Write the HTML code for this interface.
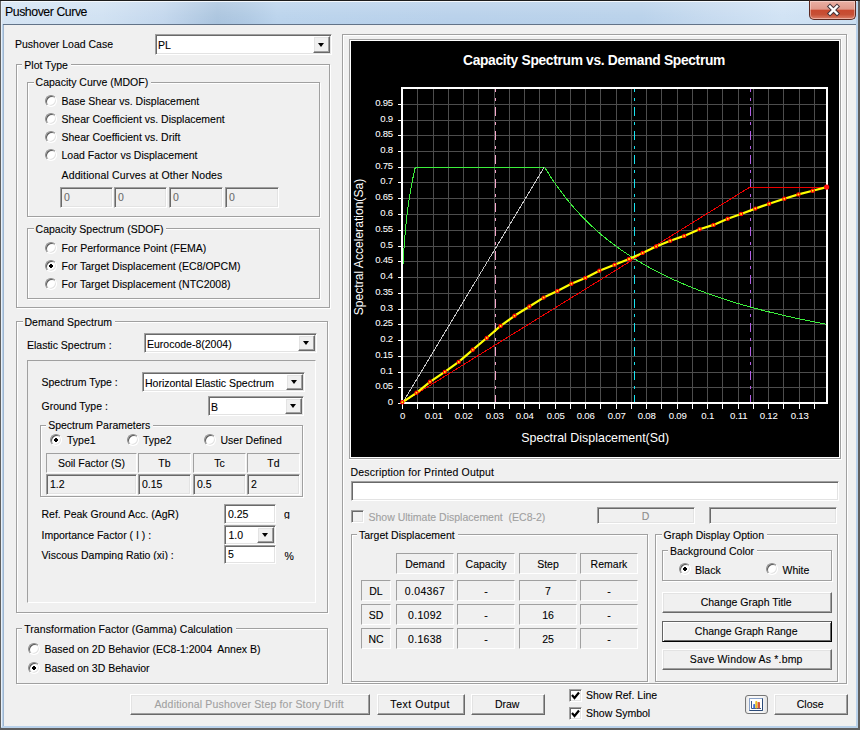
<!DOCTYPE html><html><head><meta charset='utf-8'><style>
*{margin:0;padding:0}
html,body{width:860px;height:730px;overflow:hidden;background:#2b2b2b}
body{position:relative;font-family:'Liberation Sans', sans-serif}
.t{position:absolute;white-space:pre;font-family:'Liberation Sans', sans-serif;-webkit-text-stroke:0.1px currentColor}
.etch{position:absolute;border:1px solid #a0a0a0;box-shadow:inset 1px 1px 0 #fff,1px 1px 0 #fff}
.sunk{position:absolute;border:1px solid;border-color:#a0a0a0 #fff #fff #a0a0a0;box-shadow:inset 1px 1px 0 #696969,inset -1px -1px 0 #e3e3e3}
.rad{position:absolute;width:10px;height:10px;border-radius:50%;background:#fff;border:1px solid;border-color:#8c8c8c #fff #fff #8c8c8c;box-shadow:inset 1px 1px 0 #5a5a5a,inset -1px -1px 0 #e3e3e3}
.btn{position:absolute;background:#f0f0f0;border:1px solid;border-color:#fff #696969 #696969 #fff;box-shadow:inset -1px -1px 0 #a0a0a0,inset 1px 1px 0 #e3e3e3}
.btn.def{border-color:#646464 #000 #000 #646464;box-shadow:inset 1px 1px 0 #fff,inset -1px -1px 0 #696969}
</style></head><body>
<div style="position:absolute;left:0;top:0;width:860px;height:730px;background:#5f5f5f"></div>
<div style="position:absolute;left:0px;top:0px;width:860px;height:1px;background:#1c1c1c"></div>
<div style="position:absolute;left:1px;top:1px;width:857px;height:727px;background:#b9d1ea"></div>
<div style="position:absolute;left:2px;top:1px;width:855px;height:1px;background:#f4f8fc"></div>
<div style="position:absolute;left:2px;top:2px;width:854px;height:22px;background:linear-gradient(90deg,#d5e4f3 0px,#d0e1f2 100px,#c3d7ed 160px,#aac4de 215px,#afc9e3 245px,#bad3ec 275px,#b7d0ea 450px,#b8d1ea 640px,#c6daef 710px,#d0e2f4 780px,#cadef1 854px)"></div>
<div style="position:absolute;left:2px;top:2px;width:854px;height:22px;background:linear-gradient(180deg,rgba(255,255,255,0.18) 0%,rgba(255,255,255,0.05) 60%,rgba(0,0,0,0) 100%)"></div>
<div style="position:absolute;left:1px;top:1px;width:1px;height:726px;background:#e8f0f8"></div>
<div style="position:absolute;left:3px;top:24px;width:853px;height:1px;background:#627388"></div>
<div style="position:absolute;left:3px;top:25px;width:1px;height:701px;background:#9fb6cf"></div>
<div style="position:absolute;left:4px;top:25px;width:852px;height:701px;background:#f0f0f0"></div>
<div class="t" id="t0" style="letter-spacing:-0.441px;left:5px;top:5px;font-size:12.3px;line-height:15px;color:#000;">Pushover Curve</div>
<div style="position:absolute;left:809px;top:0px;width:47px;height:20px;border:1px solid #5a2820;border-top-color:#2a1a18;border-radius:0 0 5px 5px;box-sizing:border-box;background:linear-gradient(180deg,#eab0a4 0%,#e0988a 45%,#c9492f 52%,#c65036 75%,#dc7f69 100%);box-shadow:inset 0 0 0 1px rgba(255,235,230,0.45)"></div>
<svg style="position:absolute;left:822px;top:3px" width="22" height="14" viewBox="0 0 22 14"><path d="M8,3.5 L15,10.5 M15,3.5 L8,10.5" stroke="#43333a" stroke-width="4.4" stroke-linecap="square"/><path d="M8,3.5 L15,10.5 M15,3.5 L8,10.5" stroke="#fff" stroke-width="2.4" stroke-linecap="square"/></svg>
<div class="t" id="t1" style="letter-spacing:-0.004px;left:15px;top:38px;font-size:10.5px;line-height:13px;color:#000;">Pushover Load Case</div>
<div class="sunk" style="left:155px;top:34px;width:175px;height:19px;background:#fff"></div>
<div class="btn" style="left:313px;top:36px;width:15px;height:15px"></div>
<div style="position:absolute;left:318.0px;top:42.5px;width:0;height:0;border-left:3.5px solid transparent;border-right:3.5px solid transparent;border-top:4px solid #000"></div>
<div class="t" id="t2" style="left:158px;top:39px;font-size:10.5px;line-height:13px;color:#000;">PL</div>
<div class="etch" style="left:16px;top:64px;width:312px;height:242px"></div>
<div class="t" id="t3" style="left:22.3px;top:59px;font-size:10.5px;line-height:13px;color:#000;background:#f0f0f0;padding:0 3px 0 2px;">Plot Type</div>
<div class="etch" style="left:27px;top:82px;width:291px;height:133px"></div>
<div class="t" id="t4" style="left:33.6px;top:76px;font-size:10.5px;line-height:13px;color:#000;background:#f0f0f0;padding:0 3px 0 2px;">Capacity Curve (MDOF)</div>
<div class="rad" style="left:45px;top:95px"></div>
<div class="t" id="t5" style="left:61.5px;top:95px;font-size:10.5px;line-height:13px;color:#000;">Base Shear vs. Displacement</div>
<div class="rad" style="left:45px;top:113px"></div>
<div class="t" id="t6" style="left:61.5px;top:113px;font-size:10.5px;line-height:13px;color:#000;">Shear Coefficient vs. Displacement</div>
<div class="rad" style="left:45px;top:131px"></div>
<div class="t" id="t7" style="left:61.5px;top:131px;font-size:10.5px;line-height:13px;color:#000;">Shear Coefficient vs. Drift</div>
<div class="rad" style="left:45px;top:149px"></div>
<div class="t" id="t8" style="left:61.5px;top:149px;font-size:10.5px;line-height:13px;color:#000;">Load Factor vs Displacement</div>
<div class="t" id="t9" style="letter-spacing:0.143px;left:61.5px;top:169px;font-size:10.5px;line-height:13px;color:#000;">Additional Curves at Other Nodes</div>
<div class="sunk" style="left:60px;top:187px;width:51px;height:19px;background:#f0f0f0"></div>
<div class="t" id="t10" style="left:64px;top:191px;font-size:10.5px;line-height:13px;color:#6d6d6d;">0</div>
<div class="sunk" style="left:114px;top:187px;width:51px;height:19px;background:#f0f0f0"></div>
<div class="t" id="t11" style="left:118px;top:191px;font-size:10.5px;line-height:13px;color:#6d6d6d;">0</div>
<div class="sunk" style="left:169px;top:187px;width:52px;height:19px;background:#f0f0f0"></div>
<div class="t" id="t12" style="left:173px;top:191px;font-size:10.5px;line-height:13px;color:#6d6d6d;">0</div>
<div class="sunk" style="left:225px;top:187px;width:52px;height:19px;background:#f0f0f0"></div>
<div class="t" id="t13" style="left:229px;top:191px;font-size:10.5px;line-height:13px;color:#6d6d6d;">0</div>
<div class="etch" style="left:27px;top:228px;width:291px;height:69px"></div>
<div class="t" id="t14" style="left:33.6px;top:223px;font-size:10.5px;line-height:13px;color:#000;background:#f0f0f0;padding:0 3px 0 2px;">Capacity Spectrum (SDOF)</div>
<div class="rad" style="left:45px;top:242px"></div>
<div class="t" id="t15" style="left:61.5px;top:242px;font-size:10.5px;line-height:13px;color:#000;">For Performance Point (FEMA)</div>
<div class="rad" style="left:45px;top:260px"></div>
<svg style="position:absolute;left:49px;top:264px" width="4" height="4"><path d="M1,0H3V1H4V3H3V4H1V3H0V1H1Z" fill="#000"/></svg>
<div class="t" id="t16" style="left:61.5px;top:260px;font-size:10.5px;line-height:13px;color:#000;">For Target Displacement (EC8/OPCM)</div>
<div class="rad" style="left:45px;top:278px"></div>
<div class="t" id="t17" style="left:61.5px;top:278px;font-size:10.5px;line-height:13px;color:#000;">For Target Displacement (NTC2008)</div>
<div class="etch" style="left:16px;top:321px;width:310px;height:290px"></div>
<div class="t" id="t18" style="left:22.5px;top:316px;font-size:10.5px;line-height:13px;color:#000;background:#f0f0f0;padding:0 3px 0 2px;">Demand Spectrum</div>
<div class="t" id="t19" style="left:27px;top:339px;font-size:10.5px;line-height:13px;color:#000;">Elastic Spectrum :</div>
<div class="sunk" style="left:144px;top:333px;width:171px;height:18px;background:#fff"></div>
<div class="btn" style="left:298px;top:335px;width:15px;height:14px"></div>
<div style="position:absolute;left:303.0px;top:341.0px;width:0;height:0;border-left:3.5px solid transparent;border-right:3.5px solid transparent;border-top:4px solid #000"></div>
<div class="t" id="t20" style="left:147px;top:338px;font-size:10.5px;line-height:13px;color:#000;">Eurocode-8(2004)</div>
<div style="position:absolute;left:27px;top:360px;width:287px;height:241px;border:1px solid;border-color:#a0a0a0 #fff #fff #a0a0a0;background:transparent"></div>
<div class="t" id="t21" style="left:41.5px;top:375.5px;font-size:10.5px;line-height:13px;color:#000;">Spectrum Type :</div>
<div class="sunk" style="left:142px;top:372px;width:161px;height:18px;background:#fff"></div>
<div class="btn" style="left:286px;top:374px;width:15px;height:14px"></div>
<div style="position:absolute;left:291.0px;top:380.0px;width:0;height:0;border-left:3.5px solid transparent;border-right:3.5px solid transparent;border-top:4px solid #000"></div>
<div class="t" id="t22" style="left:145px;top:376.5px;font-size:10.5px;line-height:13px;color:#000;">Horizontal Elastic Spectrum</div>
<div class="t" id="t23" style="left:41.5px;top:399.5px;font-size:10.5px;line-height:13px;color:#000;">Ground Type :</div>
<div class="sunk" style="left:208px;top:396px;width:94px;height:18px;background:#fff"></div>
<div class="btn" style="left:285px;top:398px;width:15px;height:14px"></div>
<div style="position:absolute;left:290.0px;top:404.0px;width:0;height:0;border-left:3.5px solid transparent;border-right:3.5px solid transparent;border-top:4px solid #000"></div>
<div class="t" id="t24" style="left:211px;top:401px;font-size:10.5px;line-height:13px;color:#000;">B</div>
<div class="etch" style="left:40px;top:425px;width:261px;height:70px"></div>
<div class="t" id="t25" style="left:46.2px;top:419px;font-size:10.5px;line-height:13px;color:#000;background:#f0f0f0;padding:0 3px 0 2px;">Spectrum Parameters</div>
<div class="rad" style="left:50px;top:434px"></div>
<svg style="position:absolute;left:54px;top:438px" width="4" height="4"><path d="M1,0H3V1H4V3H3V4H1V3H0V1H1Z" fill="#000"/></svg>
<div class="t" id="t26" style="left:67px;top:434px;font-size:10.5px;line-height:13px;color:#000;">Type1</div>
<div class="rad" style="left:127px;top:434px"></div>
<div class="t" id="t27" style="left:143px;top:434px;font-size:10.5px;line-height:13px;color:#000;">Type2</div>
<div class="rad" style="left:204px;top:434px"></div>
<div class="t" id="t28" style="left:220.5px;top:434px;font-size:10.5px;line-height:13px;color:#000;">User Defined</div>
<div style="position:absolute;left:46px;top:453px;width:89px;height:18px;border:1px solid;border-color:#a0a0a0 #fff #fff #a0a0a0;background:transparent"></div>
<div class="t" id="t29" style="left:91.5px;top:457px;font-size:10.5px;line-height:13px;color:#000;transform:translateX(-50%);">Soil Factor (S)</div>
<div class="sunk" style="left:46px;top:474px;width:89px;height:19px;background:#f0f0f0"></div>
<div class="t" id="t30" style="left:50px;top:478px;font-size:10.5px;line-height:13px;color:#000;">1.2</div>
<div style="position:absolute;left:138px;top:453px;width:51px;height:18px;border:1px solid;border-color:#a0a0a0 #fff #fff #a0a0a0;background:transparent"></div>
<div class="t" id="t31" style="left:164.5px;top:457px;font-size:10.5px;line-height:13px;color:#000;transform:translateX(-50%);">Tb</div>
<div class="sunk" style="left:138px;top:474px;width:51px;height:19px;background:#f0f0f0"></div>
<div class="t" id="t32" style="left:142px;top:478px;font-size:10.5px;line-height:13px;color:#000;">0.15</div>
<div style="position:absolute;left:193px;top:453px;width:51px;height:18px;border:1px solid;border-color:#a0a0a0 #fff #fff #a0a0a0;background:transparent"></div>
<div class="t" id="t33" style="left:219.5px;top:457px;font-size:10.5px;line-height:13px;color:#000;transform:translateX(-50%);">Tc</div>
<div class="sunk" style="left:193px;top:474px;width:51px;height:19px;background:#f0f0f0"></div>
<div class="t" id="t34" style="left:197px;top:478px;font-size:10.5px;line-height:13px;color:#000;">0.5</div>
<div style="position:absolute;left:247px;top:453px;width:51px;height:18px;border:1px solid;border-color:#a0a0a0 #fff #fff #a0a0a0;background:transparent"></div>
<div class="t" id="t35" style="left:273.5px;top:457px;font-size:10.5px;line-height:13px;color:#000;transform:translateX(-50%);">Td</div>
<div class="sunk" style="left:247px;top:474px;width:51px;height:19px;background:#f0f0f0"></div>
<div class="t" id="t36" style="left:251px;top:478px;font-size:10.5px;line-height:13px;color:#000;">2</div>
<div class="t" id="t37" style="left:41.5px;top:508px;font-size:10.5px;line-height:13px;color:#000;">Ref. Peak Ground Acc. (AgR)</div>
<div class="sunk" style="left:224px;top:504px;width:50px;height:18px;background:#fff"></div>
<div class="t" id="t38" style="left:228px;top:508px;font-size:10.5px;line-height:13px;color:#000;">0.25</div>
<div style="position:absolute;left:284px;top:508px;width:10px;height:11px;overflow:hidden">
<div class="t" id="t39" style="left:0px;top:0px;font-size:10.5px;line-height:13px;color:#000;">g</div>
</div>
<div class="t" id="t40" style="left:41.5px;top:529px;font-size:10.5px;line-height:13px;color:#000;">Importance Factor ( I ) :</div>
<div class="sunk" style="left:224px;top:525px;width:50px;height:18px;background:#fff"></div>
<div class="btn" style="left:257px;top:527px;width:15px;height:14px"></div>
<div style="position:absolute;left:262.0px;top:533.0px;width:0;height:0;border-left:3.5px solid transparent;border-right:3.5px solid transparent;border-top:4px solid #000"></div>
<div class="t" id="t41" style="left:228.5px;top:529px;font-size:10.5px;line-height:13px;color:#000;">1.0</div>
<div style="position:absolute;left:41px;top:549px;width:170px;height:11px;overflow:hidden">
<div class="t" id="t42" style="left:0.5px;top:0px;font-size:10.5px;line-height:13px;color:#000;">Viscous Damping Ratio (xi) :</div>
</div>
<div class="sunk" style="left:224px;top:545px;width:50px;height:17px;background:#fff"></div>
<div class="t" id="t43" style="left:228px;top:548px;font-size:10.5px;line-height:13px;color:#000;">5</div>
<div class="t" id="t44" style="left:284.5px;top:550px;font-size:10.5px;line-height:13px;color:#000;">%</div>
<div class="etch" style="left:16px;top:628px;width:310px;height:54px"></div>
<div class="t" id="t45" style="letter-spacing:0.083px;left:22.2px;top:622.5px;font-size:10.5px;line-height:13px;color:#000;background:#f0f0f0;padding:0 3px 0 2px;">Transformation Factor (Gamma) Calculation</div>
<div class="rad" style="left:28px;top:643px"></div>
<div class="t" id="t46" style="left:44.5px;top:643px;font-size:10.5px;line-height:13px;color:#000;">Based on 2D Behavior (EC8-1:2004&nbsp; Annex B)</div>
<div class="rad" style="left:28px;top:662px"></div>
<svg style="position:absolute;left:32px;top:666px" width="4" height="4"><path d="M1,0H3V1H4V3H3V4H1V3H0V1H1Z" fill="#000"/></svg>
<div class="t" id="t47" style="left:44.5px;top:662px;font-size:10.5px;line-height:13px;color:#000;">Based on 3D Behavior</div>
<div class="etch" style="left:342px;top:34px;width:503px;height:648px"></div>
<div style="position:absolute;left:349px;top:39px;width:492px;height:420px;border-top:1px solid #a0a0a0;border-left:1px solid #a0a0a0;box-sizing:border-box"></div>
<div style="position:absolute;left:350px;top:40px;width:490px;height:418px;border-top:1px solid #fff;border-left:1px solid #fff;box-sizing:border-box"></div>
<div style="position:absolute;left:351px;top:41px;width:488px;height:416px;background:#000"></div>
<div style="position:absolute;left:839px;top:40px;width:1px;height:418px;background:#fff"></div>
<div style="position:absolute;left:350px;top:457px;width:490px;height:1px;background:#fff"></div>
<div style="position:absolute;left:840px;top:39px;width:1px;height:420px;background:#a0a0a0"></div>
<div style="position:absolute;left:349px;top:458px;width:492px;height:1px;background:#a0a0a0"></div>
<div style="position:absolute;left:841px;top:39px;width:1px;height:421px;background:#fff"></div>
<div style="position:absolute;left:349px;top:459px;width:493px;height:1px;background:#fff"></div>
<div class="t" id="t48" style="letter-spacing:0.176px;left:350.6px;top:466px;font-size:10.5px;line-height:13px;color:#000;">Description for Printed Output</div>
<div class="sunk" style="left:351px;top:481px;width:486px;height:18px;background:#fff"></div>
<div class="sunk" style="left:351px;top:510px;width:11px;height:11px;background:#f0f0f0"></div>
<div class="t" id="t49" style="left:368.5px;top:510.5px;font-size:10.5px;line-height:13px;color:#a0a0a0;">Show Ultimate Displacement&nbsp; (EC8-2)</div>
<div class="sunk" style="left:597px;top:507px;width:96px;height:15px;background:#f0f0f0"></div>
<div class="t" id="t50" style="left:645.5px;top:510px;font-size:10.5px;line-height:13px;color:#8d8d8d;transform:translateX(-50%);">D</div>
<div class="sunk" style="left:709px;top:507px;width:126px;height:15px;background:#f0f0f0"></div>
<div class="etch" style="left:351px;top:534px;width:295px;height:146px"></div>
<div class="t" id="t51" style="left:357px;top:529px;font-size:10.5px;line-height:13px;color:#000;background:#f0f0f0;padding:0 3px 0 2px;">Target Displacement</div>
<div style="position:absolute;left:396px;top:553px;width:56px;height:19px;border:1px solid;border-color:#a0a0a0 #fff #fff #a0a0a0;background:transparent"></div>
<div class="t" id="t52" style="left:425.0px;top:557.5px;font-size:10.5px;line-height:13px;color:#000;transform:translateX(-50%);">Demand</div>
<div style="position:absolute;left:457px;top:553px;width:56px;height:19px;border:1px solid;border-color:#a0a0a0 #fff #fff #a0a0a0;background:transparent"></div>
<div class="t" id="t53" style="left:486.0px;top:557.5px;font-size:10.5px;line-height:13px;color:#000;transform:translateX(-50%);">Capacity</div>
<div style="position:absolute;left:519px;top:553px;width:56px;height:19px;border:1px solid;border-color:#a0a0a0 #fff #fff #a0a0a0;background:transparent"></div>
<div class="t" id="t54" style="left:548.0px;top:557.5px;font-size:10.5px;line-height:13px;color:#000;transform:translateX(-50%);">Step</div>
<div style="position:absolute;left:580px;top:553px;width:56px;height:19px;border:1px solid;border-color:#a0a0a0 #fff #fff #a0a0a0;background:transparent"></div>
<div class="t" id="t55" style="left:609.0px;top:557.5px;font-size:10.5px;line-height:13px;color:#000;transform:translateX(-50%);">Remark</div>
<div style="position:absolute;left:361px;top:580px;width:28px;height:19px;border:1px solid;border-color:#a0a0a0 #fff #fff #a0a0a0;background:transparent"></div>
<div class="t" id="t56" style="left:376px;top:584.5px;font-size:10.5px;line-height:13px;color:#000;transform:translateX(-50%);">DL</div>
<div style="position:absolute;left:396px;top:580px;width:56px;height:19px;border:1px solid;border-color:#a0a0a0 #fff #fff #a0a0a0;background:transparent"></div>
<div class="t" id="t57" style="letter-spacing:0.333px;left:425.0px;top:584.5px;font-size:10.5px;line-height:13px;color:#000;transform:translateX(-50%);">0.04367</div>
<div style="position:absolute;left:457px;top:580px;width:56px;height:19px;border:1px solid;border-color:#a0a0a0 #fff #fff #a0a0a0;background:transparent"></div>
<div class="t" id="t58" style="left:486.0px;top:584.5px;font-size:10.5px;line-height:13px;color:#000;transform:translateX(-50%);">-</div>
<div style="position:absolute;left:519px;top:580px;width:56px;height:19px;border:1px solid;border-color:#a0a0a0 #fff #fff #a0a0a0;background:transparent"></div>
<div class="t" id="t59" style="left:548.0px;top:584.5px;font-size:10.5px;line-height:13px;color:#000;transform:translateX(-50%);">7</div>
<div style="position:absolute;left:580px;top:580px;width:56px;height:19px;border:1px solid;border-color:#a0a0a0 #fff #fff #a0a0a0;background:transparent"></div>
<div class="t" id="t60" style="left:609.0px;top:584.5px;font-size:10.5px;line-height:13px;color:#000;transform:translateX(-50%);">-</div>
<div style="position:absolute;left:361px;top:604px;width:28px;height:19px;border:1px solid;border-color:#a0a0a0 #fff #fff #a0a0a0;background:transparent"></div>
<div class="t" id="t61" style="left:376px;top:608.5px;font-size:10.5px;line-height:13px;color:#000;transform:translateX(-50%);">SD</div>
<div style="position:absolute;left:396px;top:604px;width:56px;height:19px;border:1px solid;border-color:#a0a0a0 #fff #fff #a0a0a0;background:transparent"></div>
<div class="t" id="t62" style="letter-spacing:0.312px;left:425.0px;top:608.5px;font-size:10.5px;line-height:13px;color:#000;transform:translateX(-50%);">0.1092</div>
<div style="position:absolute;left:457px;top:604px;width:56px;height:19px;border:1px solid;border-color:#a0a0a0 #fff #fff #a0a0a0;background:transparent"></div>
<div class="t" id="t63" style="left:486.0px;top:608.5px;font-size:10.5px;line-height:13px;color:#000;transform:translateX(-50%);">-</div>
<div style="position:absolute;left:519px;top:604px;width:56px;height:19px;border:1px solid;border-color:#a0a0a0 #fff #fff #a0a0a0;background:transparent"></div>
<div class="t" id="t64" style="left:548.0px;top:608.5px;font-size:10.5px;line-height:13px;color:#000;transform:translateX(-50%);">16</div>
<div style="position:absolute;left:580px;top:604px;width:56px;height:19px;border:1px solid;border-color:#a0a0a0 #fff #fff #a0a0a0;background:transparent"></div>
<div class="t" id="t65" style="left:609.0px;top:608.5px;font-size:10.5px;line-height:13px;color:#000;transform:translateX(-50%);">-</div>
<div style="position:absolute;left:361px;top:628px;width:28px;height:19px;border:1px solid;border-color:#a0a0a0 #fff #fff #a0a0a0;background:transparent"></div>
<div class="t" id="t66" style="left:376px;top:632.5px;font-size:10.5px;line-height:13px;color:#000;transform:translateX(-50%);">NC</div>
<div style="position:absolute;left:396px;top:628px;width:56px;height:19px;border:1px solid;border-color:#a0a0a0 #fff #fff #a0a0a0;background:transparent"></div>
<div class="t" id="t67" style="letter-spacing:0.312px;left:425.0px;top:632.5px;font-size:10.5px;line-height:13px;color:#000;transform:translateX(-50%);">0.1638</div>
<div style="position:absolute;left:457px;top:628px;width:56px;height:19px;border:1px solid;border-color:#a0a0a0 #fff #fff #a0a0a0;background:transparent"></div>
<div class="t" id="t68" style="left:486.0px;top:632.5px;font-size:10.5px;line-height:13px;color:#000;transform:translateX(-50%);">-</div>
<div style="position:absolute;left:519px;top:628px;width:56px;height:19px;border:1px solid;border-color:#a0a0a0 #fff #fff #a0a0a0;background:transparent"></div>
<div class="t" id="t69" style="left:548.0px;top:632.5px;font-size:10.5px;line-height:13px;color:#000;transform:translateX(-50%);">25</div>
<div style="position:absolute;left:580px;top:628px;width:56px;height:19px;border:1px solid;border-color:#a0a0a0 #fff #fff #a0a0a0;background:transparent"></div>
<div class="t" id="t70" style="left:609.0px;top:632.5px;font-size:10.5px;line-height:13px;color:#000;transform:translateX(-50%);">-</div>
<div class="etch" style="left:655px;top:534px;width:181px;height:146px"></div>
<div class="t" id="t71" style="left:661.6px;top:529px;font-size:10.5px;line-height:13px;color:#000;background:#f0f0f0;padding:0 3px 0 2px;">Graph Display Option</div>
<div class="etch" style="left:662px;top:550px;width:168px;height:29px"></div>
<div class="t" id="t72" style="left:668px;top:545px;font-size:10.5px;line-height:13px;color:#000;background:#f0f0f0;padding:0 3px 0 2px;">Background Color</div>
<div class="rad" style="left:679px;top:563px"></div>
<svg style="position:absolute;left:683px;top:567px" width="4" height="4"><path d="M1,0H3V1H4V3H3V4H1V3H0V1H1Z" fill="#000"/></svg>
<div class="t" id="t73" style="left:695px;top:564px;font-size:10.5px;line-height:13px;color:#000;">Black</div>
<div class="rad" style="left:766px;top:563px"></div>
<div class="t" id="t74" style="left:782.5px;top:564px;font-size:10.5px;line-height:13px;color:#000;">White</div>
<div class="btn" style="left:662px;top:592px;width:168px;height:19px"></div>
<div class="t" id="t75" style="left:746.2px;top:596px;font-size:10.5px;line-height:13px;color:#000;transform:translateX(-50%);">Change Graph Title</div>
<div class="btn def" style="left:662px;top:621px;width:168px;height:19px"></div>
<div class="t" id="t76" style="left:746.2px;top:625px;font-size:10.5px;line-height:13px;color:#000;transform:translateX(-50%);">Change Graph Range</div>
<div class="btn" style="left:662px;top:649px;width:168px;height:19px"></div>
<div class="t" id="t77" style="letter-spacing:0.188px;left:746.2px;top:653px;font-size:10.5px;line-height:13px;color:#000;transform:translateX(-50%);">Save Window As *.bmp</div>
<div class="btn" style="left:130px;top:694px;width:238px;height:19px"></div>
<div class="t" id="t78" style="letter-spacing:0.171px;left:249.2px;top:698px;font-size:10.5px;line-height:13px;color:#a0a0a0;transform:translateX(-50%);">Additional Pushover Step for Story Drift</div>
<div class="btn" style="left:377px;top:694px;width:86px;height:19px"></div>
<div class="t" id="t79" style="letter-spacing:0.545px;left:420.2px;top:698px;font-size:10.5px;line-height:13px;color:#000;transform:translateX(-50%);">Text Output</div>
<div class="btn" style="left:471px;top:694px;width:72px;height:19px"></div>
<div class="t" id="t80" style="left:507.2px;top:698px;font-size:10.5px;line-height:13px;color:#000;transform:translateX(-50%);">Draw</div>
<div class="sunk" style="left:569px;top:689px;width:11px;height:11px;background:#fff"></div>
<svg style="position:absolute;left:569px;top:689px" width="13" height="13"><path d="M3,6 L5.5,9 L10,3.5" stroke="#000" stroke-width="2.2" fill="none"/></svg>
<div class="t" id="t81" style="left:586px;top:689px;font-size:10.5px;line-height:13px;color:#000;">Show Ref. Line</div>
<div class="sunk" style="left:569px;top:707px;width:11px;height:11px;background:#fff"></div>
<svg style="position:absolute;left:569px;top:707px" width="13" height="13"><path d="M3,6 L5.5,9 L10,3.5" stroke="#000" stroke-width="2.2" fill="none"/></svg>
<div class="t" id="t82" style="left:586px;top:707px;font-size:10.5px;line-height:13px;color:#000;">Show Symbol</div>
<div style="position:absolute;left:745px;top:695px;width:21px;height:17px;border:1px solid #767676;border-radius:3px;background:linear-gradient(90deg,#e6e6e6,#fafafa 20%,#f4f4f4 80%,#e0e0e0)"></div>
<svg style="position:absolute;left:745px;top:695px" width="23" height="19" viewBox="0 0 23 19"><rect x="4.5" y="3.5" width="13" height="12" fill="#fff" stroke="#8aa2c8" stroke-width="1"/><path d="M17.5,3.5V15.5H4.5" stroke="#2b4a78" stroke-width="1" fill="none"/><path d="M6.5,6V13.5H16" stroke="#3a5a8a" stroke-width="1" fill="none"/><rect x="8.2" y="9" width="2" height="4.5" rx="0.8" fill="#3f6fd8"/><rect x="10.3" y="6" width="2" height="7.5" rx="0.8" fill="#e8c020"/><rect x="12.5" y="6.9" width="2.5" height="6.6" rx="0.8" fill="#d85a3a"/></svg>
<div class="btn" style="left:774px;top:694px;width:72px;height:19px"></div>
<div class="t" id="t83" style="left:810.2px;top:698px;font-size:10.5px;line-height:13px;color:#000;transform:translateX(-50%);">Close</div>
<svg style="position:absolute;left:0;top:0" width="860" height="730" viewBox="0 0 860 730">
<path d="M417.5,89V402 M433.5,89V402 M448.5,89V402 M463.5,89V402 M478.5,89V402 M494.5,89V402 M509.5,89V402 M524.5,89V402 M539.5,89V402 M555.5,89V402 M570.5,89V402 M585.5,89V402 M600.5,89V402 M616.5,89V402 M631.5,89V402 M646.5,89V402 M661.5,89V402 M677.5,89V402 M692.5,89V402 M707.5,89V402 M722.5,89V402 M738.5,89V402 M753.5,89V402 M768.5,89V402 M783.5,89V402 M799.5,89V402 M814.5,89V402 M403,387.5H826 M403,372.5H826 M403,356.5H826 M403,340.5H826 M403,324.5H826 M403,309.5H826 M403,293.5H826 M403,277.5H826 M403,261.5H826 M403,246.5H826 M403,230.5H826 M403,214.5H826 M403,198.5H826 M403,182.5H826 M403,167.5H826 M403,151.5H826 M403,135.5H826 M403,120.5H826 M403,104.5H826" stroke="#4d4d4d" stroke-width="1" shape-rendering="crispEdges" fill="none"/>
<path d="M398,403.5H401 M398,387.5H401 M398,372.5H401 M398,356.5H401 M398,340.5H401 M398,324.5H401 M398,309.5H401 M398,293.5H401 M398,277.5H401 M398,261.5H401 M398,246.5H401 M398,230.5H401 M398,214.5H401 M398,198.5H401 M398,182.5H401 M398,167.5H401 M398,151.5H401 M398,135.5H401 M398,120.5H401 M398,104.5H401 M402.5,404V409 M417.5,404V409 M433.5,404V409 M448.5,404V409 M463.5,404V409 M478.5,404V409 M494.5,404V409 M509.5,404V409 M524.5,404V409 M539.5,404V409 M555.5,404V409 M570.5,404V409 M585.5,404V409 M600.5,404V409 M616.5,404V409 M631.5,404V409 M646.5,404V409 M661.5,404V409 M677.5,404V409 M692.5,404V409 M707.5,404V409 M722.5,404V409 M738.5,404V409 M753.5,404V409 M768.5,404V409 M783.5,404V409 M799.5,404V409 M814.5,404V409" stroke="#fff" stroke-width="1" shape-rendering="crispEdges" fill="none"/>
<rect x="402" y="88" width="425" height="315" fill="none" stroke="#fff" stroke-width="2" shape-rendering="crispEdges"/>
<path d="M495.5,89V402" stroke="#f7a8cc" stroke-width="1" stroke-dasharray="9 6 3 6" stroke-dashoffset="6" shape-rendering="crispEdges"/>
<path d="M634.5,89V402" stroke="#19e3f0" stroke-width="1" stroke-dasharray="9 6 3 6" stroke-dashoffset="6" shape-rendering="crispEdges"/>
<path d="M750.5,89V402" stroke="#b35ee6" stroke-width="1" stroke-dasharray="9 6 3 6" stroke-dashoffset="6" shape-rendering="crispEdges"/>
<polyline points="403.3,263.6 403.5,258.0 403.8,252.3 404.1,246.6 404.5,241.0 405.0,235.3 405.5,229.6 406.0,224.0 406.6,218.3 407.3,212.6 408.0,206.9 408.8,201.3 409.7,195.6 410.7,189.9 411.7,184.3 412.8,178.6 414.0,172.9 415.3,167.2 544.6,167.2 551.7,178.5 558.8,188.7 565.9,198.1 573.0,206.6 580.1,214.5 587.2,221.8 594.3,228.5 601.4,234.8 608.6,240.6 615.7,246.0 622.8,251.1 629.9,255.8 637.0,260.3 644.1,264.5 651.2,268.5 658.3,272.2 665.4,275.8 672.5,279.2 679.6,282.3 686.7,285.4 693.8,288.3 700.9,291.0 708.0,293.6 715.1,296.1 722.2,298.5 729.3,300.8 736.4,303.0 743.6,305.1 750.7,307.1 757.8,309.0 764.9,310.9 772.0,312.6 779.1,314.3 786.2,316.0 793.3,317.6 800.4,319.1 807.5,320.6 814.6,322.0 821.7,323.4 826.5,324.3" fill="none" stroke="#3cf03c" stroke-width="1" shape-rendering="crispEdges"/>
<path d="M402.5,403 L544,167.5" stroke="#c4c4c4" stroke-width="1" fill="none" shape-rendering="crispEdges"/>
<path d="M402.5,402.5 L749.2,187.5 L826.6,187.5" stroke="#f00000" stroke-width="1" fill="none" shape-rendering="crispEdges"/>
<polyline points="402.3,402.3 416.5,392.8 430.0,381.8 444.8,371.9 458.7,361.9 472.7,349.8 486.7,338.0 500.6,325.9 514.5,315.8 529.4,306.5 543.6,297.6 557.4,291.0 571.4,283.7 585.3,278.0 599.4,270.7 614.6,264.7 629.0,259.0 642.6,252.9 656.1,246.4 670.3,240.8 684.2,235.9 699.6,229.3 713.5,224.9 727.7,218.8 741.1,214.0 755.3,208.6 769.2,203.7 784.3,198.8 798.5,194.4 812.7,190.8 826.6,187.1" fill="none" stroke="#ffff00" stroke-width="2.2" stroke-linejoin="round"/>
<circle cx="402.3" cy="402.3" r="1.6" fill="#ffff00" stroke="#ff0000" stroke-width="1.2"/>
<circle cx="416.5" cy="392.8" r="1.6" fill="#ffff00" stroke="#ff0000" stroke-width="1.2"/>
<circle cx="430" cy="381.8" r="1.6" fill="#ffff00" stroke="#ff0000" stroke-width="1.2"/>
<circle cx="444.8" cy="371.9" r="1.6" fill="#ffff00" stroke="#ff0000" stroke-width="1.2"/>
<circle cx="458.7" cy="361.9" r="1.6" fill="#ffff00" stroke="#ff0000" stroke-width="1.2"/>
<circle cx="472.7" cy="349.8" r="1.6" fill="#ffff00" stroke="#ff0000" stroke-width="1.2"/>
<circle cx="486.7" cy="338" r="1.6" fill="#ffff00" stroke="#ff0000" stroke-width="1.2"/>
<circle cx="500.6" cy="325.9" r="1.6" fill="#ffff00" stroke="#ff0000" stroke-width="1.2"/>
<circle cx="514.5" cy="315.8" r="1.6" fill="#ffff00" stroke="#ff0000" stroke-width="1.2"/>
<circle cx="529.4" cy="306.5" r="1.6" fill="#ffff00" stroke="#ff0000" stroke-width="1.2"/>
<circle cx="543.6" cy="297.6" r="1.6" fill="#ffff00" stroke="#ff0000" stroke-width="1.2"/>
<circle cx="557.4" cy="291" r="1.6" fill="#ffff00" stroke="#ff0000" stroke-width="1.2"/>
<circle cx="571.4" cy="283.7" r="1.6" fill="#ffff00" stroke="#ff0000" stroke-width="1.2"/>
<circle cx="585.3" cy="278" r="1.6" fill="#ffff00" stroke="#ff0000" stroke-width="1.2"/>
<circle cx="599.4" cy="270.7" r="1.6" fill="#ffff00" stroke="#ff0000" stroke-width="1.2"/>
<circle cx="614.6" cy="264.7" r="1.6" fill="#ffff00" stroke="#ff0000" stroke-width="1.2"/>
<circle cx="629" cy="259" r="1.6" fill="#ffff00" stroke="#ff0000" stroke-width="1.2"/>
<circle cx="642.6" cy="252.9" r="1.6" fill="#ffff00" stroke="#ff0000" stroke-width="1.2"/>
<circle cx="656.1" cy="246.4" r="1.6" fill="#ffff00" stroke="#ff0000" stroke-width="1.2"/>
<circle cx="670.3" cy="240.8" r="1.6" fill="#ffff00" stroke="#ff0000" stroke-width="1.2"/>
<circle cx="684.2" cy="235.9" r="1.6" fill="#ffff00" stroke="#ff0000" stroke-width="1.2"/>
<circle cx="699.6" cy="229.3" r="1.6" fill="#ffff00" stroke="#ff0000" stroke-width="1.2"/>
<circle cx="713.5" cy="224.9" r="1.6" fill="#ffff00" stroke="#ff0000" stroke-width="1.2"/>
<circle cx="727.7" cy="218.8" r="1.6" fill="#ffff00" stroke="#ff0000" stroke-width="1.2"/>
<circle cx="741.1" cy="214" r="1.6" fill="#ffff00" stroke="#ff0000" stroke-width="1.2"/>
<circle cx="755.3" cy="208.6" r="1.6" fill="#ffff00" stroke="#ff0000" stroke-width="1.2"/>
<circle cx="769.2" cy="203.7" r="1.6" fill="#ffff00" stroke="#ff0000" stroke-width="1.2"/>
<circle cx="784.3" cy="198.8" r="1.6" fill="#ffff00" stroke="#ff0000" stroke-width="1.2"/>
<circle cx="798.5" cy="194.4" r="1.6" fill="#ffff00" stroke="#ff0000" stroke-width="1.2"/>
<circle cx="812.7" cy="190.8" r="1.6" fill="#ffff00" stroke="#ff0000" stroke-width="1.2"/>
<circle cx="826.6" cy="187.1" r="2.6" fill="#ff1010"/>
</svg>
<div class="t" id="t84" style="letter-spacing:-0.317px;left:463px;top:52px;font-size:13.8px;line-height:17px;color:#fff;font-weight:bold;-webkit-text-stroke:0;">Capacity Spectrum vs. Demand Spectrum</div>
<div class="t" id="t85" style="letter-spacing:0.017px;left:521.3px;top:431px;font-size:12.4px;line-height:15px;color:#fff;-webkit-text-stroke:0;">Spectral Displacement(Sd)</div>
<div class="t" id="t86" style="left:393px;top:396.0px;font-size:9.6px;line-height:12px;color:#fff;transform:translateX(-100%);-webkit-text-stroke:0.05px #fff;letter-spacing:-0.2px;">0</div>
<div class="t" id="t87" style="left:393px;top:380.0px;font-size:9.6px;line-height:12px;color:#fff;transform:translateX(-100%);-webkit-text-stroke:0.05px #fff;letter-spacing:-0.2px;">0.05</div>
<div class="t" id="t88" style="left:393px;top:365.0px;font-size:9.6px;line-height:12px;color:#fff;transform:translateX(-100%);-webkit-text-stroke:0.05px #fff;letter-spacing:-0.2px;">0.1</div>
<div class="t" id="t89" style="left:393px;top:349.0px;font-size:9.6px;line-height:12px;color:#fff;transform:translateX(-100%);-webkit-text-stroke:0.05px #fff;letter-spacing:-0.2px;">0.15</div>
<div class="t" id="t90" style="left:393px;top:333.0px;font-size:9.6px;line-height:12px;color:#fff;transform:translateX(-100%);-webkit-text-stroke:0.05px #fff;letter-spacing:-0.2px;">0.2</div>
<div class="t" id="t91" style="left:393px;top:317.0px;font-size:9.6px;line-height:12px;color:#fff;transform:translateX(-100%);-webkit-text-stroke:0.05px #fff;letter-spacing:-0.2px;">0.25</div>
<div class="t" id="t92" style="left:393px;top:302.0px;font-size:9.6px;line-height:12px;color:#fff;transform:translateX(-100%);-webkit-text-stroke:0.05px #fff;letter-spacing:-0.2px;">0.3</div>
<div class="t" id="t93" style="left:393px;top:286.0px;font-size:9.6px;line-height:12px;color:#fff;transform:translateX(-100%);-webkit-text-stroke:0.05px #fff;letter-spacing:-0.2px;">0.35</div>
<div class="t" id="t94" style="left:393px;top:270.0px;font-size:9.6px;line-height:12px;color:#fff;transform:translateX(-100%);-webkit-text-stroke:0.05px #fff;letter-spacing:-0.2px;">0.4</div>
<div class="t" id="t95" style="left:393px;top:254.0px;font-size:9.6px;line-height:12px;color:#fff;transform:translateX(-100%);-webkit-text-stroke:0.05px #fff;letter-spacing:-0.2px;">0.45</div>
<div class="t" id="t96" style="left:393px;top:239.0px;font-size:9.6px;line-height:12px;color:#fff;transform:translateX(-100%);-webkit-text-stroke:0.05px #fff;letter-spacing:-0.2px;">0.5</div>
<div class="t" id="t97" style="left:393px;top:223.0px;font-size:9.6px;line-height:12px;color:#fff;transform:translateX(-100%);-webkit-text-stroke:0.05px #fff;letter-spacing:-0.2px;">0.55</div>
<div class="t" id="t98" style="left:393px;top:207.0px;font-size:9.6px;line-height:12px;color:#fff;transform:translateX(-100%);-webkit-text-stroke:0.05px #fff;letter-spacing:-0.2px;">0.6</div>
<div class="t" id="t99" style="left:393px;top:191.0px;font-size:9.6px;line-height:12px;color:#fff;transform:translateX(-100%);-webkit-text-stroke:0.05px #fff;letter-spacing:-0.2px;">0.65</div>
<div class="t" id="t100" style="left:393px;top:175.0px;font-size:9.6px;line-height:12px;color:#fff;transform:translateX(-100%);-webkit-text-stroke:0.05px #fff;letter-spacing:-0.2px;">0.7</div>
<div class="t" id="t101" style="left:393px;top:160.0px;font-size:9.6px;line-height:12px;color:#fff;transform:translateX(-100%);-webkit-text-stroke:0.05px #fff;letter-spacing:-0.2px;">0.75</div>
<div class="t" id="t102" style="left:393px;top:144.0px;font-size:9.6px;line-height:12px;color:#fff;transform:translateX(-100%);-webkit-text-stroke:0.05px #fff;letter-spacing:-0.2px;">0.8</div>
<div class="t" id="t103" style="left:393px;top:128.0px;font-size:9.6px;line-height:12px;color:#fff;transform:translateX(-100%);-webkit-text-stroke:0.05px #fff;letter-spacing:-0.2px;">0.85</div>
<div class="t" id="t104" style="left:393px;top:113.0px;font-size:9.6px;line-height:12px;color:#fff;transform:translateX(-100%);-webkit-text-stroke:0.05px #fff;letter-spacing:-0.2px;">0.9</div>
<div class="t" id="t105" style="left:393px;top:97.0px;font-size:9.6px;line-height:12px;color:#fff;transform:translateX(-100%);-webkit-text-stroke:0.05px #fff;letter-spacing:-0.2px;">0.95</div>
<div class="t" id="t106" style="left:402.7px;top:410px;font-size:9.6px;line-height:12px;color:#fff;transform:translateX(-50%);-webkit-text-stroke:0.05px #fff;letter-spacing:-0.2px;">0</div>
<div class="t" id="t107" style="left:433.7px;top:410px;font-size:9.6px;line-height:12px;color:#fff;transform:translateX(-50%);-webkit-text-stroke:0.05px #fff;letter-spacing:-0.2px;">0.01</div>
<div class="t" id="t108" style="left:463.7px;top:410px;font-size:9.6px;line-height:12px;color:#fff;transform:translateX(-50%);-webkit-text-stroke:0.05px #fff;letter-spacing:-0.2px;">0.02</div>
<div class="t" id="t109" style="left:494.7px;top:410px;font-size:9.6px;line-height:12px;color:#fff;transform:translateX(-50%);-webkit-text-stroke:0.05px #fff;letter-spacing:-0.2px;">0.03</div>
<div class="t" id="t110" style="left:524.7px;top:410px;font-size:9.6px;line-height:12px;color:#fff;transform:translateX(-50%);-webkit-text-stroke:0.05px #fff;letter-spacing:-0.2px;">0.04</div>
<div class="t" id="t111" style="left:555.7px;top:410px;font-size:9.6px;line-height:12px;color:#fff;transform:translateX(-50%);-webkit-text-stroke:0.05px #fff;letter-spacing:-0.2px;">0.05</div>
<div class="t" id="t112" style="left:585.7px;top:410px;font-size:9.6px;line-height:12px;color:#fff;transform:translateX(-50%);-webkit-text-stroke:0.05px #fff;letter-spacing:-0.2px;">0.06</div>
<div class="t" id="t113" style="left:616.7px;top:410px;font-size:9.6px;line-height:12px;color:#fff;transform:translateX(-50%);-webkit-text-stroke:0.05px #fff;letter-spacing:-0.2px;">0.07</div>
<div class="t" id="t114" style="left:646.7px;top:410px;font-size:9.6px;line-height:12px;color:#fff;transform:translateX(-50%);-webkit-text-stroke:0.05px #fff;letter-spacing:-0.2px;">0.08</div>
<div class="t" id="t115" style="left:677.7px;top:410px;font-size:9.6px;line-height:12px;color:#fff;transform:translateX(-50%);-webkit-text-stroke:0.05px #fff;letter-spacing:-0.2px;">0.09</div>
<div class="t" id="t116" style="left:707.7px;top:410px;font-size:9.6px;line-height:12px;color:#fff;transform:translateX(-50%);-webkit-text-stroke:0.05px #fff;letter-spacing:-0.2px;">0.1</div>
<div class="t" id="t117" style="left:738.7px;top:410px;font-size:9.6px;line-height:12px;color:#fff;transform:translateX(-50%);-webkit-text-stroke:0.05px #fff;letter-spacing:-0.2px;">0.11</div>
<div class="t" id="t118" style="left:768.7px;top:410px;font-size:9.6px;line-height:12px;color:#fff;transform:translateX(-50%);-webkit-text-stroke:0.05px #fff;letter-spacing:-0.2px;">0.12</div>
<div class="t" id="t119" style="left:799.7px;top:410px;font-size:9.6px;line-height:12px;color:#fff;transform:translateX(-50%);-webkit-text-stroke:0.05px #fff;letter-spacing:-0.2px;">0.13</div>
<div class="t" style="left:358.5px;top:247px;font-size:12.1px;line-height:15px;color:#fff;transform:translate(-50%,-50%) rotate(-90deg);-webkit-text-stroke:0;">Spectral Acceleration(Sa)</div>
</body></html>
